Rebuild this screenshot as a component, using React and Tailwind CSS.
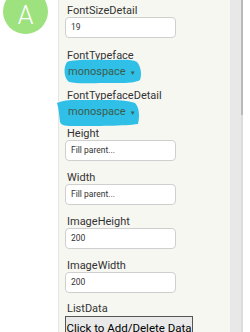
import React from "react";

const font = { fontFamily: "Roboto, 'Liberation Sans', sans-serif" };

function Label({ children, className = "" }) {
  return <div className={`h-[12px] pl-[2px] text-[11px] leading-[12px] text-[#333] ${className}`}>{children}</div>;
}

function TextBox({ value }) {
  return (
    <div className="flex h-[21px] w-[111px] items-center rounded-[4px] border border-[#cfcfcf] bg-white px-[5px] text-[8.5px] text-[#333]">
      {value}
    </div>
  );
}

function Marker({ d }) {
  return (
    <svg className="absolute left-0 top-0" width="90" height="27" viewBox="0 0 90 27">
      <path d={d} fill="#2fbfe7" />
    </svg>
  );
}

function Dropdown({ marker, markerClass }) {
  return (
    <div className="relative h-[21px] w-[111px]">
      <div className={`absolute ${markerClass}`}>
        <Marker d={marker} />
      </div>
      <div className="relative flex h-full items-center pl-[3px] text-[11px] text-[#3d5c4a]">
        monospace
        <span className="ml-[4px] text-[6px]">▼</span>
      </div>
    </div>
  );
}

export default function App() {
  return (
    <div className="flex h-[332px] w-[250px] overflow-hidden bg-white" style={font}>
      <div className="w-[58px] shrink-0">
        <div className="ml-[3px] mt-[-11px] flex h-[45px] w-[45px] items-center justify-center rounded-full bg-[#9ee27f] pt-[9px] text-[25px] font-light text-white">
          A
        </div>
      </div>

      <div className="w-[172px] shrink-0 border-l border-[#e6e6e0] bg-[#f7f7f2] pl-[6px] pt-[5px]">
        <Label>FontSizeDetail</Label>
        <TextBox value="19" />

        <Label className="mt-[12px]">FontTypeface</Label>
        <Dropdown
          markerClass="left-[-4px] top-[-3px]"
          marker="M6 3 C14 0 34 1 52 1 C62 1 70 0 76 3 C80 8 81 15 79 21 C72 25 58 24 44 24 C30 24 16 25 8 23 C3 19 2 9 6 3 Z"
        />

        <Label className="mt-[7px]">FontTypefaceDetail</Label>
        <Dropdown
          markerClass="left-[-10px] top-[-3px]"
          marker="M2 4 C10 0 22 1 34 1 C50 1 70 0 80 4 C84 8 85 16 83 25 C70 27 40 27 20 27 C12 27 6 27 5 23 C4 16 4 10 2 4 Z"
        />

        <Label className="mt-[5px]">Height</Label>
        <TextBox value="Fill parent..." />

        <Label className="mt-[11px]">Width</Label>
        <TextBox value="Fill parent..." />

        <Label className="mt-[11px]">ImageHeight</Label>
        <TextBox value="200" />

        <Label className="mt-[11px]">ImageWidth</Label>
        <TextBox value="200" />

        <Label className="mt-[10px]">ListData</Label>
        <div className="mt-[1px] flex h-[26px] w-[128px] items-center justify-center whitespace-nowrap border border-[#555] bg-[#e9e9e9] text-[11.5px] text-black">
          Click to Add/Delete Data
        </div>
      </div>

      <div className="w-[11px] shrink-0 bg-[#e8e8e8]" />
      <div className="flex w-[2px] shrink-0 flex-col bg-[#dcdcdc]">
        <div className="h-[115px] bg-[#b9b9b9]" />
      </div>
      <div className="flex-1 bg-white" />
    </div>
  );
}
